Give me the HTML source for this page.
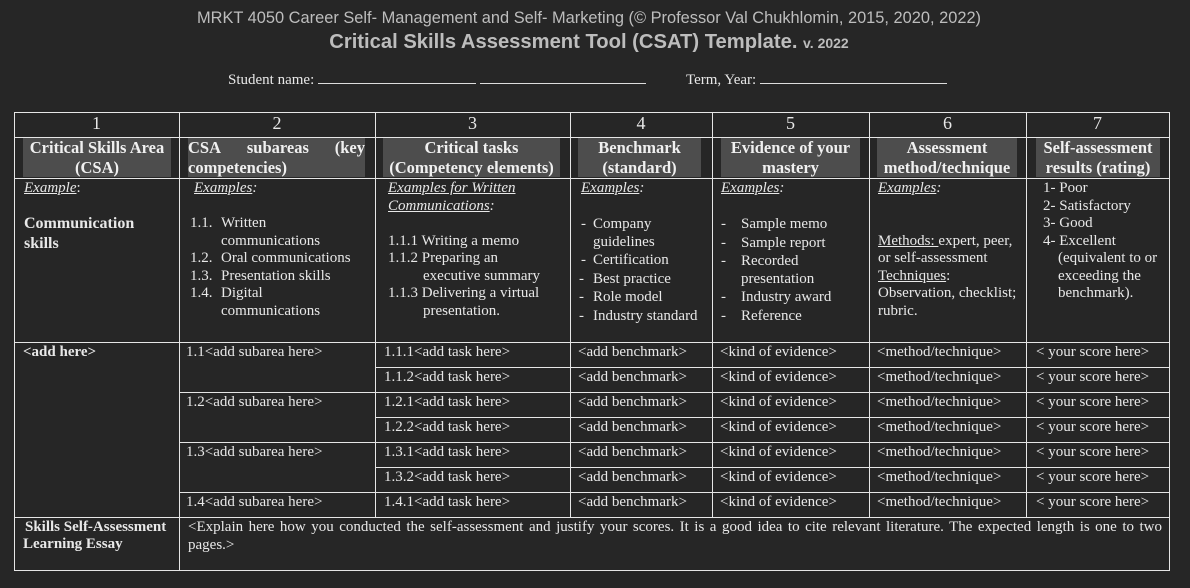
<!DOCTYPE html>
<html><head><meta charset="utf-8">
<style>
html,body{margin:0;padding:0;background:#262626;width:1190px;height:588px;overflow:hidden;position:relative}
.t{position:absolute;white-space:nowrap;font-family:"Liberation Serif",serif;font-size:15px;line-height:16px;color:#e8e8e8}
.b{font-weight:bold;font-size:16px}
.u{text-decoration:underline}
.i{font-style:italic}
.h{position:absolute;left:0;height:1px;background:#e6e6e6}
.v{position:absolute;top:112px;width:1px;background:#e6e6e6}
.g{position:absolute;top:138px;height:39px;background:#4d4d4d}
.hd{position:absolute;font-family:"Liberation Serif",serif;font-weight:bold;font-size:16.5px;line-height:20px;color:#f0f0f0;text-align:center;white-space:nowrap}
.n{position:absolute;top:113px;font-family:"Liberation Serif",serif;font-size:18px;color:#e8e8e8;text-align:center}
.a{font-family:"Liberation Sans",Arial,sans-serif;position:absolute;white-space:nowrap;color:#bdbdbd;left:0;width:1178px;text-align:center}
</style></head><body>
<div class="a" style="top:9px;font-size:16.4px;">MRKT 4050 Career Self- Management and Self- Marketing (© Professor Val Chukhlomin, 2015, 2020, 2022)</div>
<div class="a" style="top:31px;font-size:20.2px;font-weight:bold;">Critical Skills Assessment Tool (CSAT) Template. <span style="font-size:14px">v. 2022</span></div>
<div class="t" style="left:228px;top:72px;">Student name: <span style="display:inline-block;width:158px;border-bottom:1px solid #ddd"></span> <span style="display:inline-block;width:166px;border-bottom:1px solid #ddd"></span></div>
<div class="t" style="left:686px;top:72px;">Term, Year: <span style="display:inline-block;width:187px;border-bottom:1px solid #ddd"></span></div>

<div class="g" style="left:23px;width:148px"></div>
<div class="g" style="left:188px;width:177px"></div>
<div class="g" style="left:383px;width:177px"></div>
<div class="g" style="left:578px;width:123px"></div>
<div class="g" style="left:721px;width:139px"></div>
<div class="g" style="left:877px;width:140px"></div>
<div class="g" style="left:1036px;width:124px"></div>

<div class="h" style="top:112px;left:14px;width:1156px"></div>
<div class="h" style="top:137px;left:14px;width:1156px"></div>
<div class="h" style="top:178px;left:14px;width:1156px"></div>
<div class="h" style="top:342px;left:14px;width:1156px"></div>
<div class="h" style="top:367px;left:375px;width:795px"></div>
<div class="h" style="top:392px;left:179px;width:991px"></div>
<div class="h" style="top:417px;left:375px;width:795px"></div>
<div class="h" style="top:442px;left:179px;width:991px"></div>
<div class="h" style="top:467px;left:375px;width:795px"></div>
<div class="h" style="top:492px;left:179px;width:991px"></div>
<div class="h" style="top:517px;left:14px;width:1156px"></div>
<div class="h" style="top:570px;left:14px;width:1156px"></div>
<div class="v" style="left:14px;height:458px"></div>
<div class="v" style="left:179px;height:458px"></div>
<div class="v" style="left:375px;height:405px"></div>
<div class="v" style="left:570px;height:405px"></div>
<div class="v" style="left:712px;height:405px"></div>
<div class="v" style="left:869px;height:405px"></div>
<div class="v" style="left:1026px;height:405px"></div>
<div class="v" style="left:1169px;height:459px"></div>

<div class="n" style="left:14px;width:165px">1</div>
<div class="n" style="left:179px;width:196px">2</div>
<div class="n" style="left:375px;width:195px">3</div>
<div class="n" style="left:570px;width:142px">4</div>
<div class="n" style="left:712px;width:157px">5</div>
<div class="n" style="left:869px;width:157px">6</div>
<div class="n" style="left:1026px;width:143px">7</div>

<div class="hd" style="left:21px;width:152px;top:138px">Critical Skills Area<br>(CSA)</div>
<div class="hd" style="left:188px;width:177px;top:138px;text-align:left"><span style="display:flex;justify-content:space-between"><span>CSA</span><span>subareas</span><span>(key</span></span>competencies)</div>
<div class="hd" style="left:383px;width:177px;top:138px">Critical tasks<br>(Competency elements)</div>
<div class="hd" style="left:578px;width:123px;top:138px">Benchmark<br>(standard)</div>
<div class="hd" style="left:721px;width:139px;top:138px">Evidence of your<br>mastery</div>
<div class="hd" style="left:877px;width:140px;top:138px">Assessment<br>method/technique</div>
<div class="hd" style="left:1036px;width:124px;top:138px">Self-assessment<br>results (rating)</div>

<div class="t" style="left:24px;top:180px"><span class="u i">Example</span>:</div>
<div class="t b" style="left:24px;top:216px">Communication</div>
<div class="t b" style="left:24px;top:236px">skills</div>

<div class="t i" style="left:194px;top:180px"><span class="u">Examples</span>:</div>
<div class="t" style="left:190px;top:215px">1.1.</div><div class="t" style="left:221px;top:215px">Written</div>
<div class="t" style="left:221px;top:233px">communications</div>
<div class="t" style="left:190px;top:250px">1.2.</div><div class="t" style="left:221px;top:250px">Oral communications</div>
<div class="t" style="left:190px;top:268px">1.3.</div><div class="t" style="left:221px;top:268px">Presentation skills</div>
<div class="t" style="left:190px;top:285px">1.4.</div><div class="t" style="left:221px;top:285px">Digital</div>
<div class="t" style="left:221px;top:303px">communications</div>

<div class="t i" style="left:388px;top:180px"><span class="u">Examples for Written </span></div>
<div class="t i" style="left:388px;top:198px"><span class="u">Communications</span>:</div>
<div class="t" style="left:388px;top:233px">1.1.1 Writing a memo</div>
<div class="t" style="left:388px;top:250px">1.1.2 Preparing an</div>
<div class="t" style="left:423px;top:268px">executive summary</div>
<div class="t" style="left:388px;top:285px">1.1.3 Delivering a virtual</div>
<div class="t" style="left:423px;top:303px">presentation.</div>

<div class="t i" style="left:581px;top:180px"><span class="u">Examples</span>:</div>
<div class="t" style="left:581px;top:216px">-</div><div class="t" style="left:593px;top:216px">Company</div>
<div class="t" style="left:593px;top:234px">guidelines</div>
<div class="t" style="left:581px;top:252px">-</div><div class="t" style="left:593px;top:252px">Certification</div>
<div class="t" style="left:579px;top:271px">-</div><div class="t" style="left:593px;top:271px">Best practice</div>
<div class="t" style="left:579px;top:289px">-</div><div class="t" style="left:593px;top:289px">Role model</div>
<div class="t" style="left:579px;top:308px">-</div><div class="t" style="left:593px;top:308px">Industry standard</div>

<div class="t i" style="left:721px;top:180px"><span class="u">Examples</span>:</div>
<div class="t" style="left:721px;top:216px">-</div><div class="t" style="left:741px;top:216px">Sample memo</div>
<div class="t" style="left:721px;top:235px">-</div><div class="t" style="left:741px;top:235px">Sample report</div>
<div class="t" style="left:721px;top:253px">-</div><div class="t" style="left:741px;top:253px">Recorded</div>
<div class="t" style="left:741px;top:271px">presentation</div>
<div class="t" style="left:721px;top:289px">-</div><div class="t" style="left:741px;top:289px">Industry award</div>
<div class="t" style="left:721px;top:308px">-</div><div class="t" style="left:741px;top:308px">Reference</div>

<div class="t i" style="left:878px;top:180px"><span class="u">Examples</span>:</div>
<div class="t" style="left:878px;top:233px"><span class="u">Methods: </span>expert, peer,</div>
<div class="t" style="left:878px;top:250px">or self-assessment</div>
<div class="t" style="left:878px;top:268px"><span class="u">Techniques</span>:</div>
<div class="t" style="left:878px;top:285px">Observation, checklist;</div>
<div class="t" style="left:878px;top:303px">rubric.</div>

<div class="t" style="left:1043px;top:180px">1- Poor</div>
<div class="t" style="left:1043px;top:198px">2- Satisfactory</div>
<div class="t" style="left:1043px;top:215px">3- Good</div>
<div class="t" style="left:1043px;top:233px">4- Excellent</div>
<div class="t" style="left:1058px;top:250px">(equivalent to or</div>
<div class="t" style="left:1058px;top:268px">exceeding the</div>
<div class="t" style="left:1058px;top:285px">benchmark).</div>

<div class="t b" style="left:23px;top:344px;font-size:15px">&lt;add here&gt;</div>
<div class="t" style="left:186px;top:344px">1.1&lt;add subarea here&gt;</div>
<div class="t" style="left:186px;top:394px">1.2&lt;add subarea here&gt;</div>
<div class="t" style="left:186px;top:444px">1.3&lt;add subarea here&gt;</div>
<div class="t" style="left:186px;top:494px">1.4&lt;add subarea here&gt;</div>

<div class="t" style="left:384px;top:344px">1.1.1&lt;add task here&gt;</div>
<div class="t" style="left:384px;top:369px">1.1.2&lt;add task here&gt;</div>
<div class="t" style="left:384px;top:394px">1.2.1&lt;add task here&gt;</div>
<div class="t" style="left:384px;top:419px">1.2.2&lt;add task here&gt;</div>
<div class="t" style="left:384px;top:444px">1.3.1&lt;add task here&gt;</div>
<div class="t" style="left:384px;top:469px">1.3.2&lt;add task here&gt;</div>
<div class="t" style="left:384px;top:494px">1.4.1&lt;add task here&gt;</div>

<div class="t" style="left:578px;top:344px">&lt;add benchmark&gt;</div><div class="t" style="left:720px;top:344px">&lt;kind of evidence&gt;</div><div class="t" style="left:877px;top:344px">&lt;method/technique&gt;</div><div class="t" style="left:1036px;top:344px">&lt; your score here&gt;</div>
<div class="t" style="left:578px;top:369px">&lt;add benchmark&gt;</div><div class="t" style="left:720px;top:369px">&lt;kind of evidence&gt;</div><div class="t" style="left:877px;top:369px">&lt;method/technique&gt;</div><div class="t" style="left:1036px;top:369px">&lt; your score here&gt;</div>
<div class="t" style="left:578px;top:394px">&lt;add benchmark&gt;</div><div class="t" style="left:720px;top:394px">&lt;kind of evidence&gt;</div><div class="t" style="left:877px;top:394px">&lt;method/technique&gt;</div><div class="t" style="left:1036px;top:394px">&lt; your score here&gt;</div>
<div class="t" style="left:578px;top:419px">&lt;add benchmark&gt;</div><div class="t" style="left:720px;top:419px">&lt;kind of evidence&gt;</div><div class="t" style="left:877px;top:419px">&lt;method/technique&gt;</div><div class="t" style="left:1036px;top:419px">&lt; your score here&gt;</div>
<div class="t" style="left:578px;top:444px">&lt;add benchmark&gt;</div><div class="t" style="left:720px;top:444px">&lt;kind of evidence&gt;</div><div class="t" style="left:877px;top:444px">&lt;method/technique&gt;</div><div class="t" style="left:1036px;top:444px">&lt; your score here&gt;</div>
<div class="t" style="left:578px;top:469px">&lt;add benchmark&gt;</div><div class="t" style="left:720px;top:469px">&lt;kind of evidence&gt;</div><div class="t" style="left:877px;top:469px">&lt;method/technique&gt;</div><div class="t" style="left:1036px;top:469px">&lt; your score here&gt;</div>
<div class="t" style="left:578px;top:494px">&lt;add benchmark&gt;</div><div class="t" style="left:720px;top:494px">&lt;kind of evidence&gt;</div><div class="t" style="left:877px;top:494px">&lt;method/technique&gt;</div><div class="t" style="left:1036px;top:494px">&lt; your score here&gt;</div>

<div class="t b" style="left:25px;top:519px;font-size:15px">Skills Self-Assessment</div>
<div class="t b" style="left:23px;top:536px;font-size:15px">Learning Essay</div>
<div class="t" style="left:188px;top:518px;width:974px;white-space:normal;text-align:justify;text-align-last:left;line-height:18px">&lt;Explain here how you conducted the self-assessment and justify your scores. It is a good idea to cite relevant literature. The expected length is one to two pages.&gt;</div>
</body></html>
